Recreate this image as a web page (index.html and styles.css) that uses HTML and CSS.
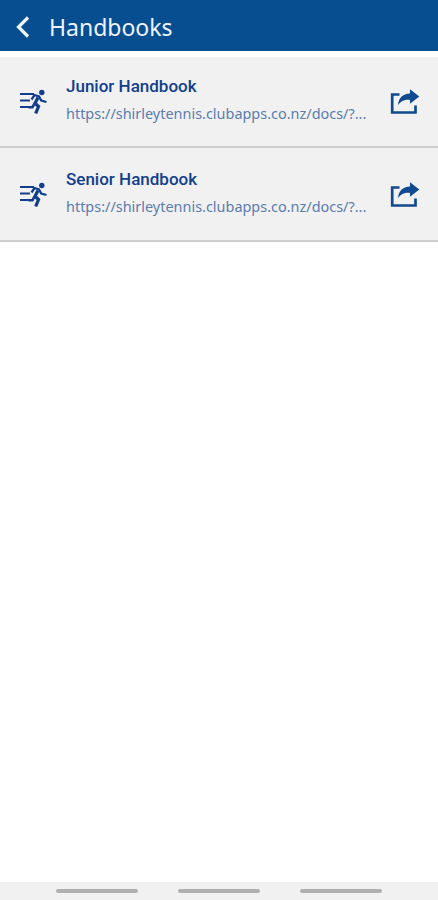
FILE: index.html
```html
<!DOCTYPE html>
<html lang="en">
<head>
    <meta charset="UTF-8">
    <meta name="viewport" content="width=device-width, initial-scale=1.0">
    <title>Handbooks</title>
    <link rel="stylesheet" href="styles.css">
</head>
<body>
    <!-- Shared icons -->
    <svg class="icon-defs" width="0" height="0">
        <symbol id="runner" viewBox="0 0 30 26">
            <g fill="none" stroke="currentColor" stroke-width="2.2">
                <path d="M2 5h14M2 11.5h10M2 18h9"/>
                <path d="M13.5 10.5l3-4.500 4.500 1.500 2.200 4 5.300 1.500" stroke-width="2.3"/>
                <path d="M20 8.500l-3 5.800 3.500 3.200-2.800 7" stroke-width="3.3"/>
                <path d="M16.500 14.500l-2 3.700h-4" stroke-width="2.6"/>
            </g>
            <circle cx="23.8" cy="3.5" r="2.7" fill="currentColor"/>
        </symbol>
        <symbol id="share" viewBox="0 0 30 26">
            <path d="M9.500 5.500H2.200v18h23.300v-7" fill="none" stroke="currentColor" stroke-width="2.7"/>
            <path d="M20 .300L29.300 7.500 20 14.700v-3.800c-5.500-.400-8.800 1-12 5.300C8.500 9 12.500 4.800 20 4.400z" fill="currentColor"/>
        </symbol>
    </svg>

    <header class="header">
        <a class="back" href="#" aria-label="Back">
            <svg width="14" height="22" viewBox="0 0 14 22"><path d="M12 1.500L2.500 11l9.500 9.500" fill="none" stroke="currentColor" stroke-width="3.2"/></svg>
        </a>
        <h1>Handbooks</h1>
    </header>

    <main class="list">
        <div class="item">
            <svg class="runner-icon"><use href="#runner"/></svg>
            <div class="item-text">
                <h2>Junior Handbook</h2>
                <p>https://shirleytennis.clubapps.co.nz/docs/?...</p>
            </div>
            <svg class="share-icon"><use href="#share"/></svg>
        </div>
        <div class="item">
            <svg class="runner-icon"><use href="#runner"/></svg>
            <div class="item-text">
                <h2>Senior Handbook</h2>
                <p>https://shirleytennis.clubapps.co.nz/docs/?...</p>
            </div>
            <svg class="share-icon"><use href="#share"/></svg>
        </div>
    </main>

    <!-- System navigation -->
    <nav class="nav-bar">
        <span></span>
        <span></span>
        <span></span>
    </nav>
</body>
</html>
```

FILE: styles.css
```css
/* Base styles */
* {
    box-sizing: border-box;
}

body {
    font-family: 'Noto Sans', sans-serif;
    background-color: #fff;
    margin: 0;
    height: 100vh;
    display: flex;
    flex-direction: column;
}

h1, h2, p {
    margin: 0;
}

.icon-defs {
    display: none;
}

/* Header */
.header {
    display: flex;
    align-items: center;
    height: 51px;
    padding: 3px 16px 0;
    background-color: #074e91;
    color: #eef4ff;
}

.back {
    display: flex;
    width: 33px;
    color: inherit;
}

.header h1 {
    font-size: 23px;
    font-weight: 400;
    line-height: 32px;
}

/* Handbook list */
.list {
    flex: 1;
    padding-top: 6px;
}

.item {
    display: flex;
    height: 94px;
    padding: 20px 18px 0 18px;
    background-color: #f1f1f1;
    border-bottom: 2px solid #cfcfcf;
}

.item:first-child {
    height: 91px;
    padding-top: 18px;
}

.runner-icon {
    width: 30px;
    height: 26px;
    margin-top: 14px;
    color: #123f8c;
}

.item-text {
    flex: 1;
    margin-left: 18px;
    white-space: nowrap;
}

.item-text h2 {
    font-family: Roboto, sans-serif;
    font-size: 17px;
    font-weight: 500;
    line-height: 22px;
    color: #123f8c;
}

.item-text p {
    margin-top: 6px;
    font-size: 14.45px;
    line-height: 22px;
    color: #5a7cae;
}

.share-icon {
    width: 30px;
    height: 26px;
    margin-top: 14px;
    color: #114a8f;
}

/* System navigation */
.nav-bar {
    display: flex;
    justify-content: center;
    gap: 40px;
    height: 18px;
    padding-top: 7px;
    background-color: #f1f1f1;
}

.nav-bar span {
    width: 82px;
    height: 4px;
    border-radius: 2px;
    background-color: #b0b0b0;
}
```
